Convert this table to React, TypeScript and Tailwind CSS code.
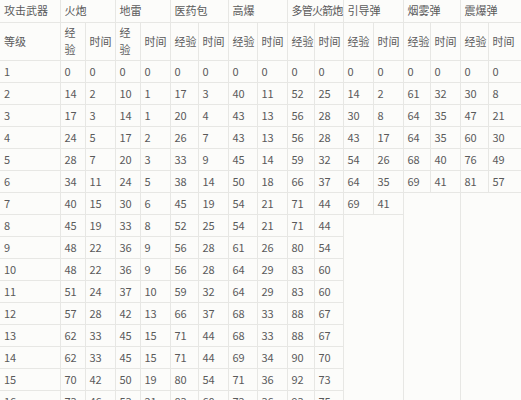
import React from "react";

const colWidths = [60, 25, 30, 25, 30, 28, 30, 29, 30, 27, 29, 30, 30, 27, 30, 28, 33];

const weapons = ["火炮", "地雷", "医药包", "高爆", "多管火箭炮", "引导弹", "烟雾弹", "震爆弹"];

// level -> pairs of [exp, time] per weapon; shorter rows end early
const rows: number[][] = [
  [0, 0, 0, 0, 0, 0, 0, 0, 0, 0, 0, 0, 0, 0, 0, 0],
  [14, 2, 10, 1, 17, 3, 40, 11, 52, 25, 14, 2, 61, 32, 30, 8],
  [17, 3, 14, 1, 20, 4, 43, 13, 56, 28, 30, 8, 64, 35, 47, 21],
  [24, 5, 17, 2, 26, 7, 43, 13, 56, 28, 43, 17, 64, 35, 60, 30],
  [28, 7, 20, 3, 33, 9, 45, 14, 59, 32, 54, 26, 68, 40, 76, 49],
  [34, 11, 24, 5, 38, 14, 50, 18, 66, 37, 64, 35, 69, 41, 81, 57],
  [40, 15, 30, 6, 45, 19, 54, 21, 71, 44, 69, 41],
  [45, 19, 33, 8, 52, 25, 54, 21, 71, 44],
  [48, 22, 36, 9, 56, 28, 61, 26, 80, 54],
  [48, 22, 36, 9, 56, 28, 64, 29, 83, 60],
  [51, 24, 37, 10, 59, 32, 64, 29, 83, 60],
  [57, 28, 42, 13, 66, 37, 68, 33, 88, 67],
  [62, 33, 45, 15, 71, 44, 68, 33, 88, 67],
  [62, 33, 45, 15, 71, 44, 69, 34, 90, 70],
  [70, 42, 50, 19, 80, 54, 71, 36, 92, 73],
  [73, 46, 53, 21, 83, 60, 72, 36, 93, 75],
];

const cell = "border border-[#e7e7e4] pl-[4px] pr-0 py-0 text-left align-middle font-normal";

export default function App() {
  return (
    <div
      className="w-[521px] h-[400px] overflow-hidden bg-[#fcfcfa] text-[#5a5a5a] text-[11px] leading-[17px]"
      style={{ fontFamily: '"Noto Sans CJK SC", "Noto Sans", sans-serif' }}
    >
      <table className="table-fixed border-collapse border-hidden w-[521px]">
        <colgroup>
          {colWidths.map((w, i) => (
            <col key={i} style={{ width: w }} />
          ))}
        </colgroup>
        <thead>
          <tr className="h-[22px]">
            <th className={`${cell} whitespace-nowrap`}>攻击武器</th>
            {weapons.map((w) => (
              <th
                key={w}
                colSpan={2}
                className={`${cell} whitespace-nowrap ${w.length > 3 ? "tracking-[-0.8px]" : ""}`}
              >
                {w}
              </th>
            ))}
          </tr>
          <tr className="h-[38px]">
            <th className={cell}>等级</th>
            {weapons.map((w) => (
              <React.Fragment key={w}>
                <th className={cell}>经验</th>
                <th className={cell}>时间</th>
              </React.Fragment>
            ))}
          </tr>
        </thead>
        <tbody>
          {rows.map((r, i) => (
            <tr key={i} className="h-[22px]">
              <td className={cell}>{i + 1}</td>
              {r.map((v, j) => (
                <td key={j} className={cell}>
                  {v}
                </td>
              ))}
              {i === 6 && (
                <>
                  <td colSpan={2} rowSpan={10} className={cell}></td>
                  <td colSpan={2} rowSpan={10} className={cell}></td>
                </>
              )}
              {i === 7 && <td colSpan={2} rowSpan={9} className={cell}></td>}
            </tr>
          ))}
        </tbody>
      </table>
    </div>
  );
}
